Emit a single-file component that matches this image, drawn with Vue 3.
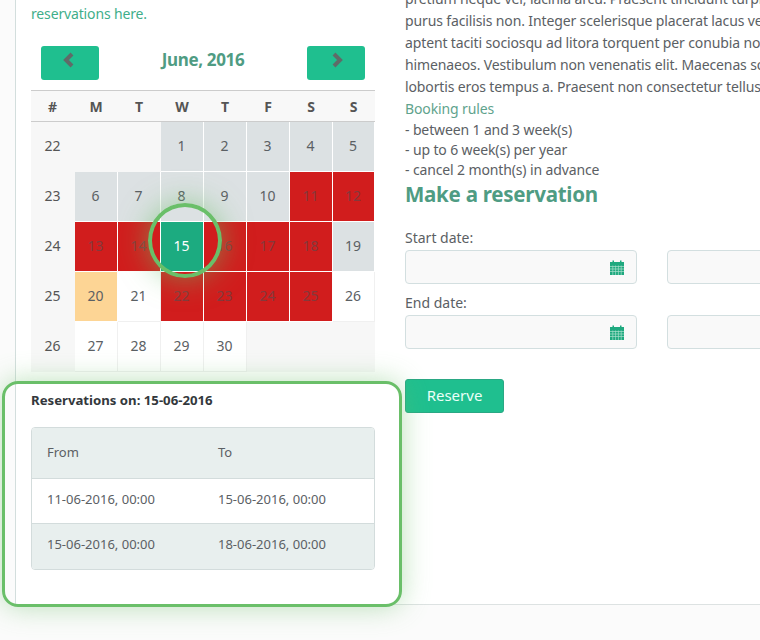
<script setup>
const heads = ['#', 'M', 'T', 'W', 'T', 'F', 'S', 'S']
const weeks = [
  { n: 22, days: [['', 'none'], ['', 'none'], [1, 'past'], [2, 'past'], [3, 'past'], [4, 'past'], [5, 'past']] },
  { n: 23, days: [[6, 'past'], [7, 'past'], [8, 'past'], [9, 'past'], [10, 'past'], [11, 'busy'], [12, 'busy']] },
  { n: 24, days: [[13, 'busy'], [14, 'busy'], [15, 'sel'], [16, 'busy'], [17, 'busy'], [18, 'busy'], [19, 'past']] },
  { n: 25, days: [[20, 'today'], [21, 'free'], [22, 'busy'], [23, 'busy'], [24, 'busy'], [25, 'busy'], [26, 'free']] },
  { n: 26, days: [[27, 'free'], [28, 'free'], [29, 'free'], [30, 'free'], ['', 'none'], ['', 'none'], ['', 'none']] },
]
const rows = [
  ['11-06-2016, 00:00', '15-06-2016, 00:00'],
  ['15-06-2016, 00:00', '18-06-2016, 00:00'],
]
const paragraph = [
  'pretium neque vel, lacinia arcu. Praesent tincidunt turpis',
  'purus facilisis non. Integer scelerisque placerat lacus vel',
  'aptent taciti sociosqu ad litora torquent per conubia nostra',
  'himenaeos. Vestibulum non venenatis elit. Maecenas sodales',
  'lobortis eros tempus a. Praesent non consectetur tellus.',
]
const rules = ['- between 1 and 3 week(s)', '- up to 6 week(s) per year', '- cancel 2 month(s) in advance']
const fields = ['Start date:', 'End date:']
</script>

<template>
  <div class="page">
    <main class="card">
      <section class="left">
        <p class="intro">reservations here.</p>
        <div class="nav">
          <button class="nav-btn">
            <svg width="14" height="16" viewBox="0 0 14 16"><path d="M10 2 4 8l6 6" fill="none" stroke="#5f6b68" stroke-width="4"/></svg>
          </button>
          <h3 class="month">June, 2016</h3>
          <button class="nav-btn">
            <svg width="14" height="16" viewBox="0 0 14 16"><path d="M4 2l6 6-6 6" fill="none" stroke="#5f6b68" stroke-width="4"/></svg>
          </button>
        </div>
        <div class="cal">
          <div class="cal-head">
            <span v-for="(h, i) in heads" :key="i">{{ h }}</span>
          </div>
          <div v-for="w in weeks" :key="w.n" class="cal-row">
            <span class="wk">{{ w.n }}</span>
            <span v-for="(d, i) in w.days" :key="i" class="day" :class="d[1]">{{ d[0] }}</span>
          </div>
        </div>
        <div class="res">
          <h4>Reservations on: 15-06-2016</h4>
          <div class="res-table">
            <div class="res-row head"><span>From</span><span>To</span></div>
            <div v-for="(r, i) in rows" :key="i" class="res-row" :class="{ alt: i === 1 }">
              <span>{{ r[0] }}</span><span>{{ r[1] }}</span>
            </div>
          </div>
        </div>
      </section>
      <section class="right">
        <div class="para">
          <div v-for="l in paragraph" :key="l">{{ l }}</div>
        </div>
        <div class="rules-title">Booking rules</div>
        <div v-for="r in rules" :key="r" class="rule">{{ r }}</div>
        <h2>Make a reservation</h2>
        <form class="form">
          <div v-for="f in fields" :key="f" class="field">
            <label>{{ f }}</label>
            <div class="inputs">
              <div class="input">
                <svg width="14" height="15" viewBox="0 0 14 15">
                  <path fill="#1fa97f" d="M0 2h2.500V.5h1.500V2h6V.5h1.500V2H14v13H0z"/>
                  <path stroke="#a9e0cd" stroke-width=".7" fill="none" d="M0 6.500h14M0 9h14M0 11.500h14M2.800 5.500V15M5.600 5.500V15M8.400 5.500V15M11.200 5.500V15"/>
                </svg>
              </div>
              <div class="input second"></div>
            </div>
          </div>
          <button type="button" class="reserve">Reserve</button>
        </form>
      </section>
    </main>
    <div class="ring"></div>
    <div class="glow-box"></div>
  </div>
</template>

<style>
html, body { margin: 0; background: #fbfbfb; overflow: hidden; }
</style>

<style scoped>
.page {
  position: relative;
  width: 760px;
  height: 640px;
  overflow: hidden;
  font-family: "Noto Sans", "Open Sans", sans-serif;
  font-size: 13.5px;
  color: #5b6064;
}
.card {
  display: flex;
  gap: 30px;
  width: 900px;
  height: 605px;
  margin-left: 15px;
  padding: 0 15px;
  box-sizing: border-box;
  background: #fff;
  border-left: 1px solid #d3dedd;
  border-bottom: 1px solid #dde2e2;
}
.left { width: 344px; flex: none; }
.intro { margin: 4px 0 0; height: 20px; line-height: 20px; font-size: 14px; letter-spacing: -.15px; color: #3fae8a; }
.nav {
  display: flex;
  align-items: center;
  justify-content: space-between;
  padding: 0 10px;
  margin-top: 22px;
  height: 34px;
}
.nav-btn {
  width: 58px;
  height: 34px;
  border: 0;
  border-radius: 3px;
  background: #1fbf8f;
  display: flex;
  align-items: center;
  justify-content: center;
  padding: 0 2px 6px 0;
}
.nav-btn + .month + .nav-btn { padding: 0 0 6px 2px; }
.month { margin: 0 0 7px; font-size: 17px; font-weight: 700; letter-spacing: -.35px; color: #4f9c83; }
.cal { margin-top: 10px; }
.cal-head {
  display: grid;
  grid-template-columns: 44px repeat(6, 43px) 42px;
  height: 30px;
  align-items: center;
  background: #f8f8f8;
  border-top: 1px solid #ccc;
  border-bottom: 1px solid #ccc;
  text-align: center;
  font-weight: 700;
  font-size: 14px;
  color: #555;
}
.cal-head span { padding-right: 1px; }
.cal-row {
  display: grid;
  grid-template-columns: 44px repeat(6, 43px) 42px;
  height: 50px;
  text-align: center;
  line-height: 48px;
  font-size: 14px;
  background: #f7f7f7;
}
.day { box-sizing: border-box; border: 1px solid transparent; border-width: 0 1px 1px 0; padding-right: 1px; }
.wk { color: #555; padding-right: 1px; }
.past { background: #dce1e3; border-color: #fff; }
.busy { background: #d11d1d; border-color: #fff; color: #84393c; }
.sel { background: #1cab80; border-color: #fff; color: #fff; }
.today { background: #fdd595; border-color: #fff; }
.free { background: #fff; border-color: #f0f0f0; }
.none { background: #f7f7f7; }
.res h4 { margin: 19px 0 0; height: 19px; line-height: 18px; font-size: 13.2px; font-weight: 700; color: #33383c; }
.res-table {
  margin-top: 17px;
  border: 1px solid #d3dcdc;
  border-radius: 4px;
  overflow: hidden;
  background: #fff;
}
.res-row {
  display: grid;
  grid-template-columns: 171px 1fr;
  padding: 0 15px 5px;
  height: 39px;
  align-items: center;
  border-top: 1px solid #d3dcdc;
  font-size: 13px;
}
.res-row.head { height: 47px; padding-bottom: 3px; border-top: 0; background: #e8efee; }
.res-row.alt { height: 40px; background: #e8efee; }
.right { flex: 1; white-space: nowrap; }
.para { margin-top: -12px; line-height: 22px; font-size: 14px; letter-spacing: -.13px; }
.rules-title { line-height: 22px; font-size: 14px; letter-spacing: -.13px; color: #5fa38d; }
.rule { line-height: 20px; font-size: 14px; letter-spacing: -.13px; }
h2 { margin: 0; font-size: 20.500px; line-height: 28px; font-weight: 700; letter-spacing: -.25px; color: #4f9c83; }
.form { margin-top: 20px; }
.field label { display: block; height: 20px; line-height: 20px; font-size: 14px; }
.field + .field { margin-top: 9px; }
.inputs { display: flex; gap: 30px; margin-top: 2px; }
.input {
  box-sizing: border-box;
  width: 232px;
  height: 34px;
  flex: none;
  border: 1px solid #d3dfe0;
  border-radius: 4px;
  background: #f9f9f9;
  display: flex;
  align-items: center;
  justify-content: flex-end;
  padding-right: 12px;
}
.reserve {
  display: block;
  margin-top: 30px;
  width: 99px;
  height: 34px;
  border: 1px solid #2aa884;
  border-radius: 3px;
  background: #1fbf8f;
  color: #eafff8;
  padding: 0 0 2px;
  font: 15px "Noto Sans", sans-serif;
}
.ring {
  position: absolute;
  left: 148px;
  top: 203px;
  width: 74px;
  height: 75px;
  box-sizing: border-box;
  border: 4px solid #6abf69;
  border-radius: 50%;
  box-shadow: 0 0 30px rgba(106, 191, 105, .6);
}
.glow-box {
  position: absolute;
  left: 2px;
  top: 381px;
  width: 400px;
  height: 226px;
  box-sizing: border-box;
  border: 3px solid #6abf69;
  border-radius: 16px;
  box-shadow: 0 0 28px rgba(106, 191, 105, .45);
}
</style>
